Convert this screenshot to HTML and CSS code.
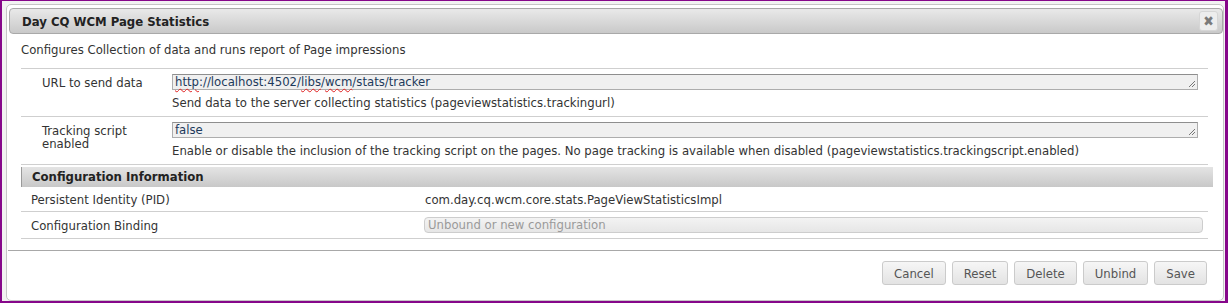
FILE: index.html
```html
<!DOCTYPE html>
<html lang="en">
<head>
    <meta charset="UTF-8">
    <title>Day CQ WCM Page Statistics</title>
    <link rel="stylesheet" href="styles.css">
</head>
<body>
    <div class="screen">
        <div class="dialog">
            <!-- Title bar -->
            <div class="dialog-title">
                <span>Day CQ WCM Page Statistics</span>
                <span class="close-btn">&#10006;</span>
            </div>
            <div class="dialog-body">
                <p class="intro">Configures Collection of data and runs report of Page impressions</p>
                <div class="prop-row">
                    <div class="prop-label">URL to send data</div>
                    <div class="prop-value">
                        <div class="textbox"><span class="typo">http</span>://localhost:4502/<span class="typo">libs</span>/<span class="typo">wcm</span>/stats/tracker<svg class="grip" width="8" height="8" viewBox="0 0 8 8"><path d="M7 1 L1 7 M7 4 L4 7" stroke="#777" stroke-width="1" fill="none"/></svg></div>
                        <div class="prop-help">Send data to the server collecting statistics (pageviewstatistics.trackingurl)</div>
                    </div>
                </div>
                <div class="prop-row">
                    <div class="prop-label">Tracking script enabled</div>
                    <div class="prop-value">
                        <div class="textbox">false<svg class="grip" width="8" height="8" viewBox="0 0 8 8"><path d="M7 1 L1 7 M7 4 L4 7" stroke="#777" stroke-width="1" fill="none"/></svg></div>
                        <div class="prop-help">Enable or disable the inclusion of the tracking script on the pages. No page tracking is available when disabled (pageviewstatistics.trackingscript.enabled)</div>
                    </div>
                </div>
                <!-- Configuration info -->
                <div class="config-head">Configuration Information</div>
                <div class="config-row">
                    <div class="config-label">Persistent Identity (PID)</div>
                    <div class="config-value">com.day.cq.wcm.core.stats.PageViewStatisticsImpl</div>
                </div>
                <div class="config-row">
                    <div class="config-label">Configuration Binding</div>
                    <div class="config-value"><div class="binding">Unbound or new configuration</div></div>
                </div>
            </div>
            <div class="dialog-footer">
                <button class="btn">Cancel</button>
                <button class="btn">Reset</button>
                <button class="btn">Delete</button>
                <button class="btn">Unbind</button>
                <button class="btn">Save</button>
            </div>
        </div>
    </div>
</body>
</html>
```

FILE: styles.css
```css
body {
    margin: 0;
    background: #fff;
    font-family: "DejaVu Sans Condensed", "DejaVu Sans", sans-serif;
    font-size: 13px;
    color: #333;
}
.screen {
    height: 303px;
    box-sizing: border-box;
    border: solid #86078a;
    border-width: 1px 3px 2px 2px;
    background: #f2f2f2;
    overflow: hidden;
}
.dialog {
    height: 297px;
    box-sizing: border-box;
    margin: 3px 1px 0 4px;
    padding: 3px 0 0 2px;
    background: #fff;
    border: 1px solid #c6c6c6;
    border-radius: 5px;
}
.dialog-title {
    height: 26px;
    box-sizing: border-box;
    display: flex;
    align-items: center;
    justify-content: space-between;
    padding: 0 4px 0 12px;
    border: 1px solid #a9a9a9;
    border-radius: 4px;
    background: linear-gradient(#e9e9e9, #c9c9c9);
    font-size: 13px;
    font-weight: bold;
    color: #222;
}
.close-btn {
    width: 19px;
    height: 20px;
    box-sizing: border-box;
    display: flex;
    align-items: center;
    justify-content: center;
    border: 1px solid #d6d6d6;
    border-radius: 3px;
    background: #ededed;
    color: #7a7a7a;
    font-size: 14px;
}
.dialog-body {
    padding: 0 15px 0 12px;
}
.intro {
    margin: 0;
    padding: 8px 0 10px 0;
    line-height: 16px;
    border-bottom: 1px solid #cfcfcf;
}
.prop-row {
    display: flex;
    padding: 5px 0;
    border-bottom: 1px solid #cfcfcf;
}
.prop-label {
    flex: 0 0 151px;
    box-sizing: border-box;
    padding: 2px 20px 0 21px;
    line-height: 13px;
}
.prop-value {
    flex: 1;
    padding-right: 10px;
}
.textbox {
    position: relative;
    height: 16px;
    box-sizing: border-box;
    padding: 0 2px;
    border: 1px solid #adadad;
    border-top-color: #8e8e8e;
    background: #f0f0f0;
    color: #1d3a5c;
    line-height: 14px;
}
.typo {
    text-decoration: underline wavy #e02020;
    text-decoration-thickness: 1px;
    text-underline-offset: 2px;
}
.grip {
    position: absolute;
    right: 1px;
    bottom: 1px;
}
.prop-help {
    margin-top: 5px;
    line-height: 16px;
}
.config-head {
    margin: 2px -5px 0 0;
    height: 20px;
    line-height: 20px;
    padding-left: 10px;
    border-left: 1px solid #9a9a9a;
    background: linear-gradient(#e4e4e4, #c8c8c8);
    font-weight: bold;
    color: #222;
}
.config-row {
    display: flex;
    align-items: center;
    min-height: 24px;
    border-bottom: 1px solid #cfcfcf;
}
.config-row + .config-row {
    min-height: 26px;
}
.config-label {
    flex: 0 0 404px;
    box-sizing: border-box;
    padding-left: 10px;
}
.config-value {
    flex: 1;
}
.binding {
    height: 16px;
    box-sizing: border-box;
    margin: 0 5px 0 -1px;
    padding-left: 3px;
    border: 1px solid #cdcdcd;
    border-radius: 4px;
    background: linear-gradient(#f3f3f3, #e6e6e6);
    color: #9a9a9a;
    line-height: 14px;
}
.dialog-footer {
    display: flex;
    justify-content: flex-end;
    gap: 6px;
    margin: 11px 0 0 -1px;
    padding: 10px 16px 0 0;
    border-top: 1px solid #a8a8a8;
}
.btn {
    height: 24px;
    padding: 0 11px;
    border: 1px solid #cbcbcb;
    border-radius: 3px;
    background: linear-gradient(#f6f6f6, #e3e3e3);
    color: #555;
    font-family: inherit;
    font-size: 13px;
}
```
